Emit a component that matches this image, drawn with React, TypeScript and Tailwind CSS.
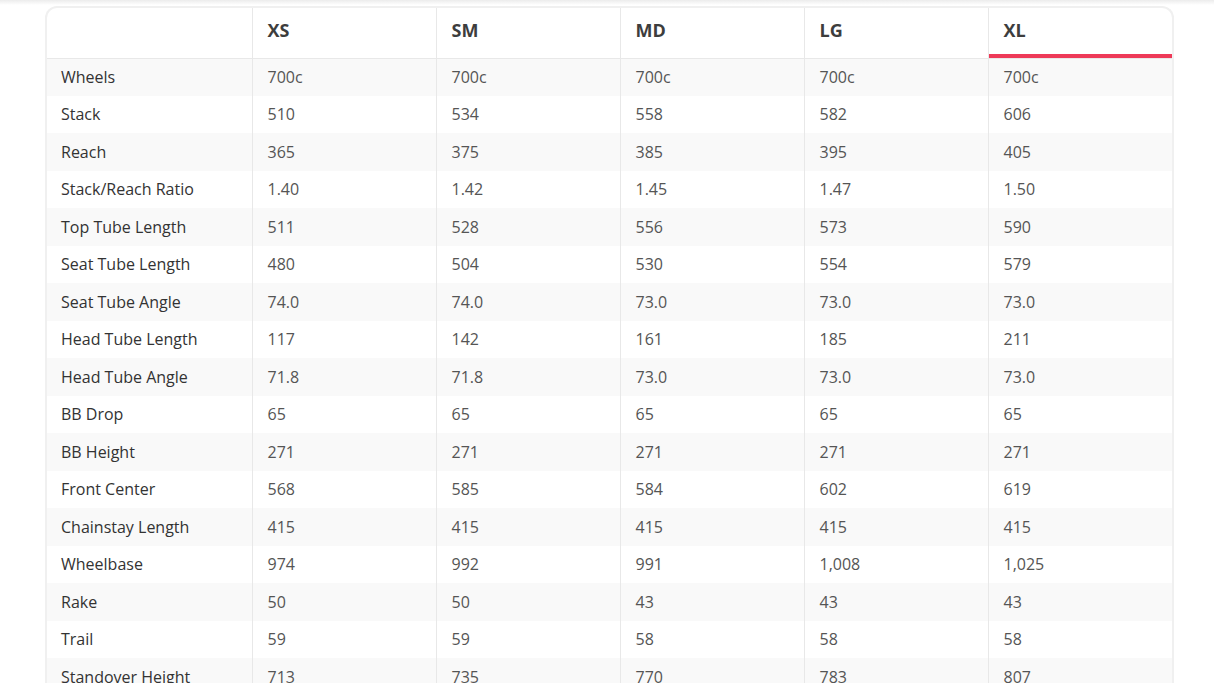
import React from "react";

const sizes = ["XS", "SM", "MD", "LG", "XL"];
const rows: [string, string[]][] = [
  ["Wheels", ["700c", "700c", "700c", "700c", "700c"]],
  ["Stack", ["510", "534", "558", "582", "606"]],
  ["Reach", ["365", "375", "385", "395", "405"]],
  ["Stack/Reach Ratio", ["1.40", "1.42", "1.45", "1.47", "1.50"]],
  ["Top Tube Length", ["511", "528", "556", "573", "590"]],
  ["Seat Tube Length", ["480", "504", "530", "554", "579"]],
  ["Seat Tube Angle", ["74.0", "74.0", "73.0", "73.0", "73.0"]],
  ["Head Tube Length", ["117", "142", "161", "185", "211"]],
  ["Head Tube Angle", ["71.8", "71.8", "73.0", "73.0", "73.0"]],
  ["BB Drop", ["65", "65", "65", "65", "65"]],
  ["BB Height", ["271", "271", "271", "271", "271"]],
  ["Front Center", ["568", "585", "584", "602", "619"]],
  ["Chainstay Length", ["415", "415", "415", "415", "415"]],
  ["Wheelbase", ["974", "992", "991", "1,008", "1,025"]],
  ["Rake", ["50", "50", "43", "43", "43"]],
  ["Trail", ["59", "59", "58", "58", "58"]],
  ["Standover Height", ["713", "735", "770", "783", "807"]],
];

export default function App() {
  return (
    <div
      className="h-[683px] w-[1214px] overflow-hidden bg-white"
      style={{ fontFamily: "'Open Sans', 'Noto Sans', sans-serif" }}
    >
      <div className="h-[5px] bg-gradient-to-b from-[#ececec] to-white" />
      <div className="ml-[45px] mt-[1px] w-[1129px] overflow-hidden rounded-t-[12px] border-2 border-b-0 border-[#f0f0f0]">
        <table className="w-full table-fixed border-collapse">
          <colgroup>
            <col className="w-[205px]" />
            <col className="w-[184px]" />
            <col className="w-[184px]" />
            <col className="w-[184px]" />
            <col className="w-[184px]" />
            <col />
          </colgroup>
          <thead>
            <tr className="h-[50px]">
              <th className="border-b border-[#e8e8e8]" />
              {sizes.map((s) => (
                <th
                  key={s}
                  className={`border-b border-l border-[#e8e8e8] pb-[5px] pl-[15px] text-left align-middle text-[18px] font-bold text-[#3d3d3d] ${
                    s === "XL" ? "shadow-[inset_0_-4px_0_#ee3a58]" : ""
                  }`}
                >
                  {s}
                </th>
              ))}
            </tr>
          </thead>
          <tbody>
            {rows.map(([label, vals], i) => (
              <tr key={label} className={`h-[37.5px] ${i % 2 === 0 ? "bg-[#f9f9f9]" : "bg-white"}`}>
                <td className="pl-[14px] text-[16px] font-medium text-[#333333]">{label}</td>
                {vals.map((v, j) => (
                  <td key={j} className="border-l border-[#e8e8e8] pl-[15px] text-[16px] text-[#555555]">
                    {v}
                  </td>
                ))}
              </tr>
            ))}
          </tbody>
        </table>
      </div>
    </div>
  );
}
